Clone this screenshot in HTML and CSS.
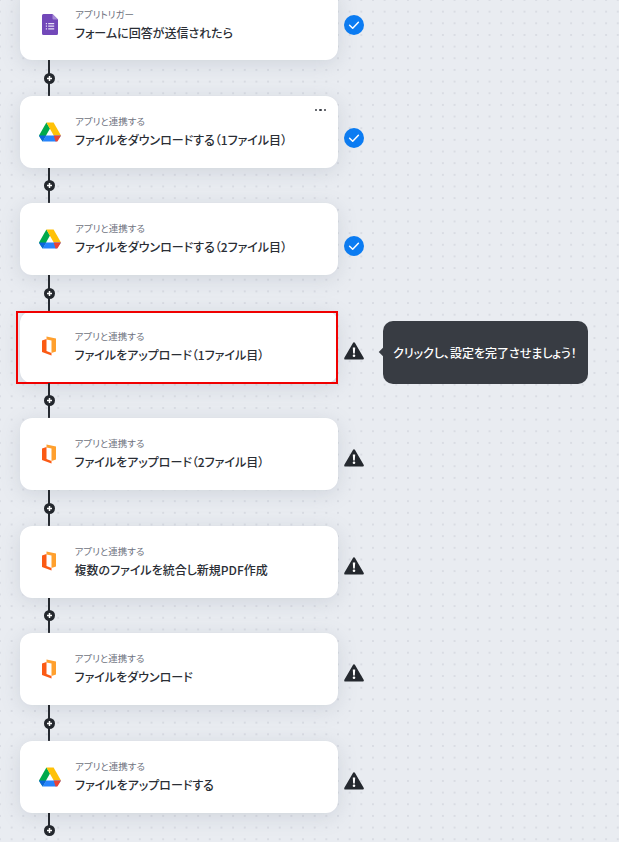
FILE: index.html
```html
<!DOCTYPE html>
<html lang="ja">
<head>
    <meta charset="UTF-8">
    <meta name="viewport" content="width=device-width, initial-scale=1.0">
    <title>フロー</title>
    <link rel="stylesheet" href="styles.css">
</head>
<body>
    <svg class="sprites" width="0" height="0" aria-hidden="true">
        <symbol id="icon-forms" viewBox="0 0 16 21">
            <path d="M1.5 0H10.5L16 5.5V19.5A1.5 1.5 0 0 1 14.5 21H1.5A1.5 1.5 0 0 1 0 19.5V1.5A1.5 1.5 0 0 1 1.5 0Z" fill="#7248b9"/>
            <path d="M10.5 0L16 5.5H11.5A1 1 0 0 1 10.5 4.5Z" fill="#a58ad6"/>
            <path d="M3.8 9H5V10.2H3.8ZM6.2 9H12.2V10.2H6.2ZM3.8 11.6H5V12.8H3.8ZM6.2 11.6H12.2V12.8H6.2ZM3.8 14.2H5V15.4H3.8ZM6.2 14.2H12.2V15.4H6.2Z" fill="#e6dff5"/>
        </symbol>
        <symbol id="icon-drive" viewBox="0 0 22 20">
            <path d="M7.4 0.5L0 13.4L3.6 19.5L11 6.6Z" fill="#00a94b"/>
            <path d="M7.4 0.5H14.6L22 13.4H14.7Z" fill="#ffc107"/>
            <path d="M7.3 13.4H22L18.4 18.6A2 2 0 0 1 16.8 19.5H3.6Z" fill="#2684fc"/>
            <path d="M22 13.4L18.4 19.5H16.5L14.7 13.4Z" fill="#ea4335"/>
            <path d="M0 13.4H7.3L3.6 19.5L0.6 15Z" fill="#0a66d8"/>
        </symbol>
        <symbol id="icon-office" viewBox="0 0 15 21">
            <path d="M4.5 0.5L14 2.5V15.5L9.5 17V4.5L4.5 3.5Z" fill="#ffa02e"/>
            <path d="M0 4.5L4.5 3V15L9.5 17V19.5L0 16Z" fill="#fb5a14"/>
        </symbol>
        <symbol id="icon-check" viewBox="0 0 20 20">
            <circle cx="10" cy="10" r="10" fill="#0b7cf3"/>
            <path d="M5.6 10.2L8.7 13.2L14.4 7.2" fill="none" stroke="#fff" stroke-width="1.5" stroke-linecap="round" stroke-linejoin="round"/>
        </symbol>
        <symbol id="icon-warn" viewBox="0 0 20 18">
            <path d="M10 1.6L18.6 16.4H1.4Z" fill="#24282e" stroke="#24282e" stroke-width="2.4" stroke-linejoin="round"/>
            <path d="M8.8 5.6H11.2L10.8 11.4H9.2Z" fill="#fff"/>
            <circle cx="10" cy="13.8" r="1.3" fill="#fff"/>
        </symbol>
        <symbol id="icon-plus" viewBox="0 0 11 11">
            <circle cx="5.5" cy="5.5" r="5.5" fill="#24282e"/>
            <path d="M3 5.5H8M5.5 3V8" stroke="#fff" stroke-width="1.5"/>
        </symbol>
    </svg>

    <div class="flow">
        <div class="step trigger">
            <div class="card">
                <svg class="app-icon forms"><use href="#icon-forms"/></svg>
                <div class="card-text">
                    <span class="label">アプリトリガー</span>
                    <span class="title">フォームに回答が送信されたら</span>
                </div>
            </div>
            <svg class="status check"><use href="#icon-check"/></svg>
        </div>
        <div class="link"><svg class="plus"><use href="#icon-plus"/></svg></div>

        <div class="step">
            <div class="card">
                <svg class="app-icon drive"><use href="#icon-drive"/></svg>
                <div class="card-text">
                    <span class="label">アプリと連携する</span>
                    <span class="title">ファイルをダウンロードする（1ファイル目）</span>
                </div>
                <span class="more"><i></i><i></i><i></i></span>
            </div>
            <svg class="status check"><use href="#icon-check"/></svg>
        </div>
        <div class="link"><svg class="plus"><use href="#icon-plus"/></svg></div>

        <div class="step">
            <div class="card">
                <svg class="app-icon drive"><use href="#icon-drive"/></svg>
                <div class="card-text">
                    <span class="label">アプリと連携する</span>
                    <span class="title">ファイルをダウンロードする（2ファイル目）</span>
                </div>
            </div>
            <svg class="status check"><use href="#icon-check"/></svg>
        </div>
        <div class="link"><svg class="plus"><use href="#icon-plus"/></svg></div>

        <div class="step">
            <div class="card selected">
                <svg class="app-icon office"><use href="#icon-office"/></svg>
                <div class="card-text">
                    <span class="label">アプリと連携する</span>
                    <span class="title">ファイルをアップロード（1ファイル目）</span>
                </div>
            </div>
            <svg class="status warn"><use href="#icon-warn"/></svg>
            <div class="tooltip">クリックし、設定を完了させましょう！</div>
        </div>
        <div class="link"><svg class="plus"><use href="#icon-plus"/></svg></div>

        <div class="step">
            <div class="card">
                <svg class="app-icon office"><use href="#icon-office"/></svg>
                <div class="card-text">
                    <span class="label">アプリと連携する</span>
                    <span class="title">ファイルをアップロード（2ファイル目）</span>
                </div>
            </div>
            <svg class="status warn"><use href="#icon-warn"/></svg>
        </div>
        <div class="link"><svg class="plus"><use href="#icon-plus"/></svg></div>

        <div class="step">
            <div class="card">
                <svg class="app-icon office"><use href="#icon-office"/></svg>
                <div class="card-text">
                    <span class="label">アプリと連携する</span>
                    <span class="title">複数のファイルを統合し新規PDF作成</span>
                </div>
            </div>
            <svg class="status warn"><use href="#icon-warn"/></svg>
        </div>
        <div class="link"><svg class="plus"><use href="#icon-plus"/></svg></div>

        <div class="step">
            <div class="card">
                <svg class="app-icon office"><use href="#icon-office"/></svg>
                <div class="card-text">
                    <span class="label">アプリと連携する</span>
                    <span class="title">ファイルをダウンロード</span>
                </div>
            </div>
            <svg class="status warn"><use href="#icon-warn"/></svg>
        </div>
        <div class="link"><svg class="plus"><use href="#icon-plus"/></svg></div>

        <div class="step">
            <div class="card">
                <svg class="app-icon drive"><use href="#icon-drive"/></svg>
                <div class="card-text">
                    <span class="label">アプリと連携する</span>
                    <span class="title">ファイルをアップロードする</span>
                </div>
            </div>
            <svg class="status warn"><use href="#icon-warn"/></svg>
        </div>
        <div class="link last"><svg class="plus"><use href="#icon-plus"/></svg></div>
    </div>
</body>
</html>
```

FILE: styles.css
```css
html, body {
    height: 100%;
}
body {
    margin: 0;
    overflow: hidden;
    font-family: "Noto Sans CJK JP", "Noto Sans", sans-serif;
    font-feature-settings: "palt";
    background-color: #e9ecf1;
    background-image: radial-gradient(circle at 1px 1px, #d9dce3 0, #d9dce3 1px, transparent 1.3px);
    background-size: 11.66px 11.66px;
    background-position: -1px -1px;
}
.sprites {
    position: absolute;
}
.flow {
    display: flex;
    flex-direction: column;
    margin-top: -11.6px;
    padding-left: 20px;
}
.step {
    position: relative;
    display: flex;
    align-items: center;
    gap: 5.5px;
}
.card {
    position: relative;
    display: flex;
    align-items: center;
    box-sizing: border-box;
    width: 318px;
    height: 72px;
    background: #fff;
    border-radius: 12px;
    box-shadow: 0 0 1px #d5d9e0, 0 4px 20px rgba(110, 120, 140, 0.2);
}
.selected::after {
    content: "";
    position: absolute;
    top: 0;
    left: -4px;
    right: 0;
    bottom: -1px;
    border: 2px solid #f00000;
}
.app-icon {
    flex: none;
}
.forms {
    width: 16px;
    height: 21px;
    margin: 0 17px 0 22px;
}
.drive {
    width: 22px;
    height: 20px;
    margin: 0 14px 0 19px;
}
.office {
    width: 15px;
    height: 21px;
    margin: 0 17.5px 0 22px;
}
.card-text {
    display: flex;
    flex-direction: column;
    gap: 3px;
    padding-bottom: 1px;
}
.trigger .card-text {
    padding-top: 2px;
}
.label {
    font-size: 9.5px;
    line-height: 14px;
    color: #6e7280;
}
.title {
    font-size: 12px;
    line-height: 18px;
    font-weight: 500;
    color: #2a2e35;
}
.more {
    position: absolute;
    top: 13px;
    right: 12px;
    display: flex;
    gap: 2px;
}
.more i {
    width: 2.5px;
    height: 2.5px;
    border-radius: 50%;
    background: #3a3e46;
}
.status {
    flex: none;
    width: 20px;
}
.check {
    height: 20px;
    margin-top: 13px;
}
.trigger .check {
    margin-top: 2px;
}
.warn {
    height: 18px;
    margin-top: 8px;
}
.tooltip {
    position: absolute;
    left: 363px;
    top: 10px;
    display: flex;
    align-items: center;
    box-sizing: border-box;
    width: 205px;
    height: 63px;
    padding-left: 10px;
    background: #383c43;
    border-radius: 10px;
    color: #fff;
    font-size: 12px;
    font-weight: 500;
}
.tooltip::before {
    content: "";
    position: absolute;
    left: -3px;
    top: 28px;
    width: 6px;
    height: 6px;
    background: #383c43;
    transform: rotate(45deg);
}
.link {
    position: relative;
    display: flex;
    align-items: center;
    justify-content: center;
    width: 11px;
    height: 35.5px;
    margin-left: 23.5px;
}
.link::before {
    content: "";
    position: absolute;
    top: 0;
    bottom: 0;
    left: 4.75px;
    width: 1.5px;
    background: #24282e;
}
.last::before {
    bottom: 17px;
}
.plus {
    position: relative;
    width: 11px;
    height: 11px;
}
```
